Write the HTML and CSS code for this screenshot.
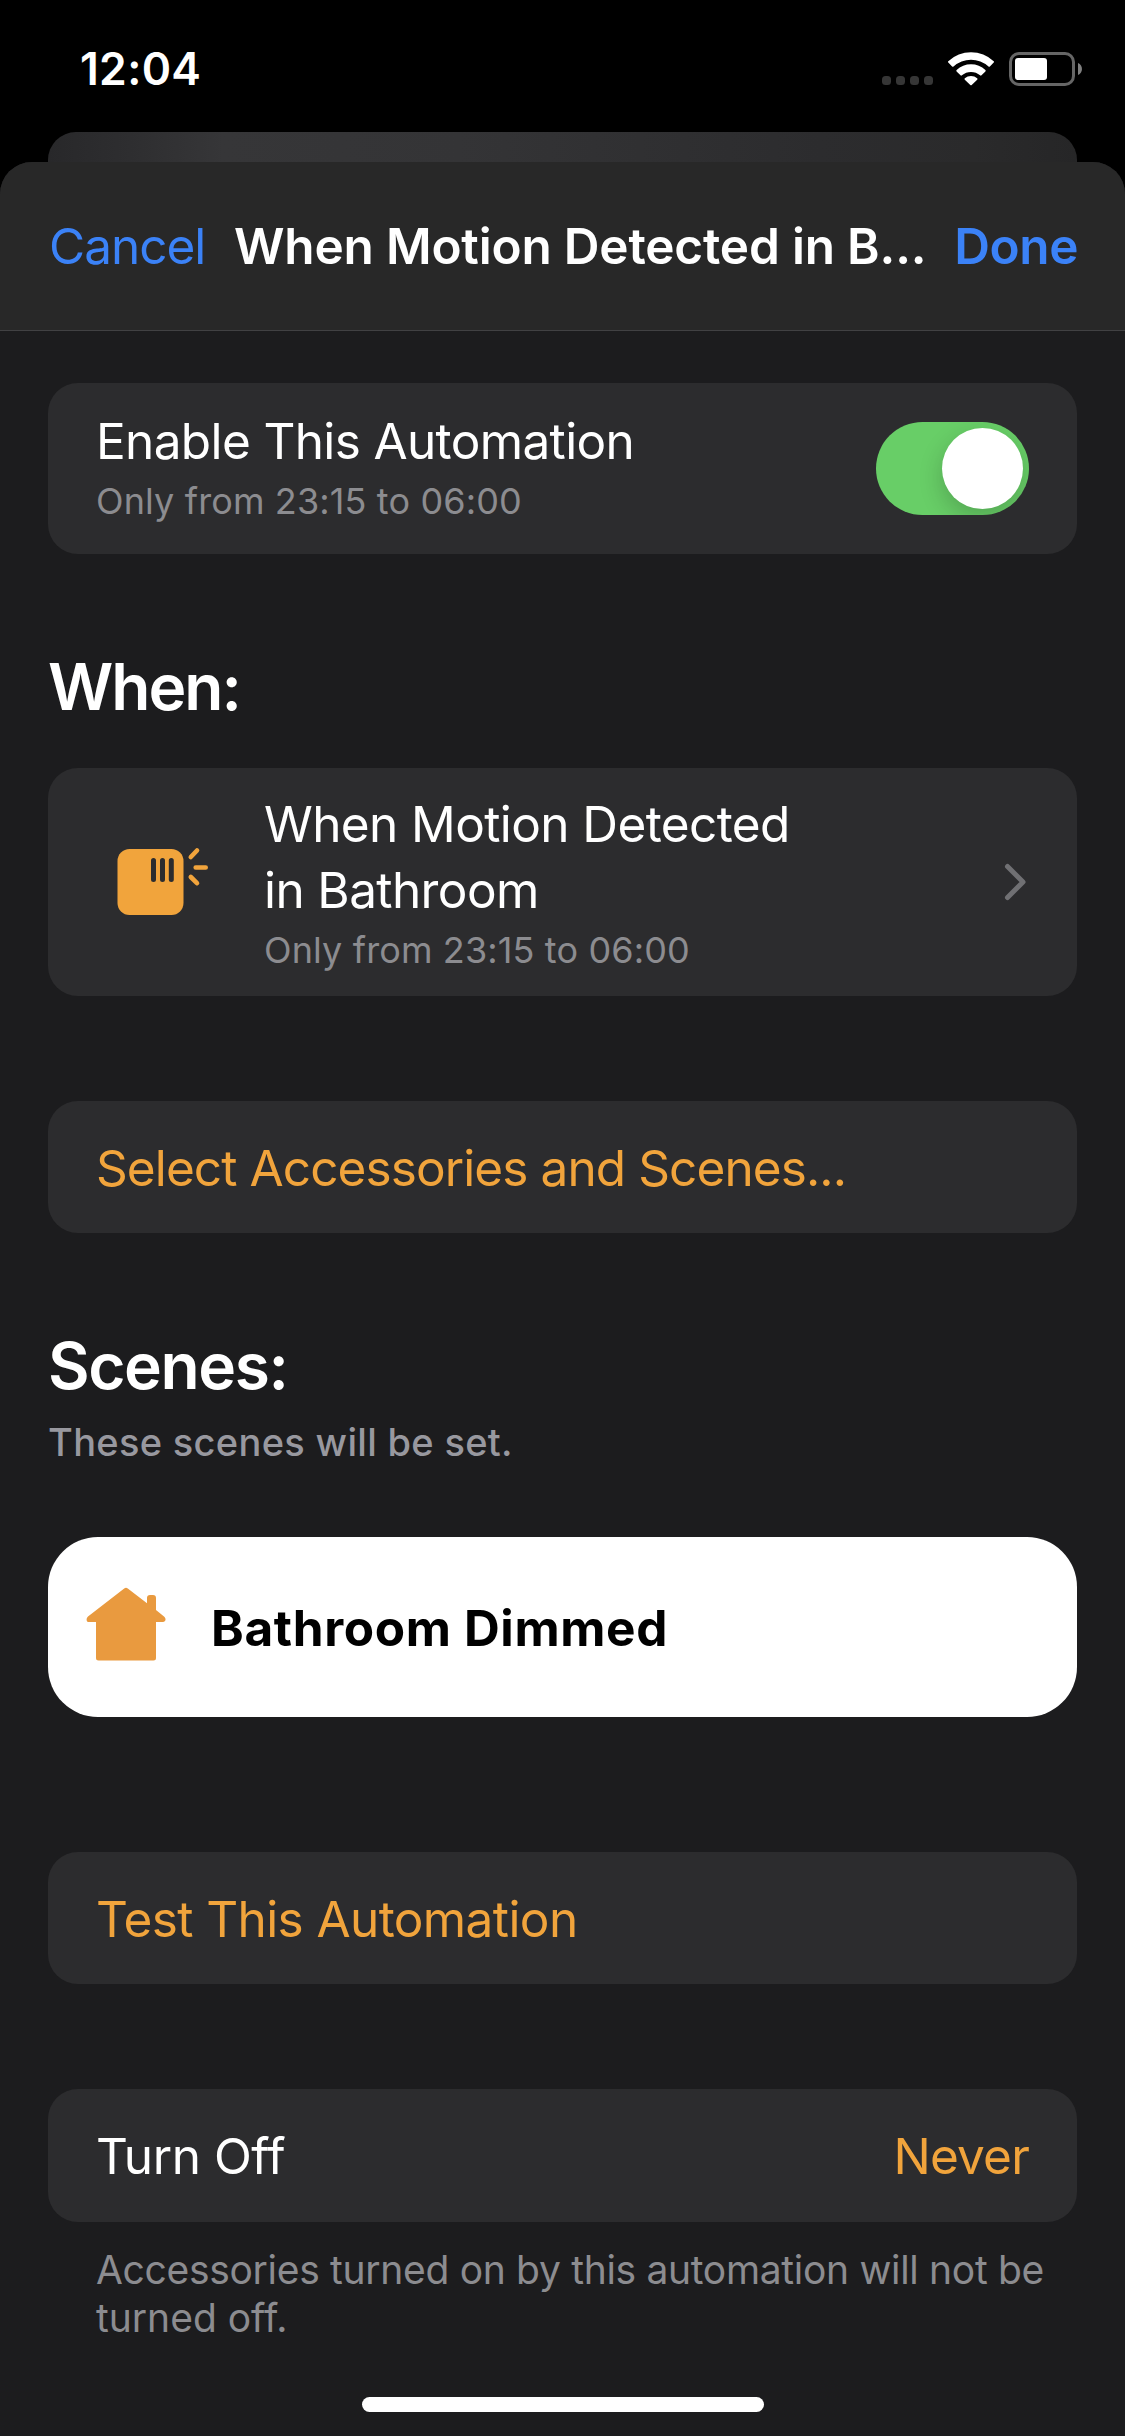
FILE: index.html
```html
<!DOCTYPE html>
<html lang="en">
<head>
<meta charset="utf-8">
<title>Automation</title>
<link rel="stylesheet" href="styles.css">
</head>
<body>
<div class="screen">
  <header class="status">
    <span class="time">12:04</span>
    <svg class="status-icons" width="204" height="40" viewBox="0 0 204 40">
      <g fill="#363636">
        <rect x="2" y="26" width="9" height="9" rx="3.5"/>
        <rect x="16" y="26" width="9" height="9" rx="3.5"/>
        <rect x="30" y="26" width="9" height="9" rx="3.5"/>
        <rect x="44" y="26" width="9" height="9" rx="3.5"/>
      </g>
      <g fill="#fff">
        <path d="M68.3 11.200a33 33 0 0 1 45.400 0a1 1 0 0 1 0 1.400l-3.800 3.800a1 1 0 0 1-1.400 0a26 26 0 0 0-35 0a1 1 0 0 1-1.400 0l-3.800-3.800a1 1 0 0 1 0-1.400z"/>
        <path d="M76.600 20a21 21 0 0 1 28.800 0a1 1 0 0 1 0 1.400l-3.900 3.900a1 1 0 0 1-1.400 0a14 14 0 0 0-18.200 0a1 1 0 0 1-1.400 0l-3.900-3.900a1 1 0 0 1 0-1.400z"/>
        <path d="M84.800 28.300a9.500 9.500 0 0 1 12.400 0a1 1 0 0 1 0 1.400l-5.500 5.200a1 1 0 0 1-1.400 0l-5.500-5.200a1 1 0 0 1 0-1.400z"/>
      </g>
      <rect x="130.500" y="3.500" width="63" height="31" rx="8.500" fill="none" stroke="#666" stroke-width="3"/>
      <rect x="135" y="8" width="32" height="22" rx="3" fill="#fff"/>
      <path d="M198 13c5.300 2 5.300 10 0 12z" fill="#808080"/>
    </svg>
  </header>
  <div class="back-sheet"></div>
  <main class="sheet">
    <nav class="nav">
      <span class="cancel">Cancel</span>
      <h1 class="nav-title">When Motion Detected in B...</h1>
      <span class="done">Done</span>
    </nav>
    <div class="content">
      <section class="card enable">
        <div>
          <div class="label l-enable">Enable This Automation</div>
          <div class="sub">Only from 23:15 to 06:00</div>
        </div>
        <div class="toggle"><div class="knob"></div></div>
      </section>
      <h2 class="heading h-when">When:</h2>
      <section class="card trigger">
        <svg class="sensor" width="96" height="74" viewBox="0 0 96 74">
          <rect x="3.500" y="4" width="66" height="66" rx="12" fill="#f1a43c"/>
          <g stroke="#2c2c2e" stroke-width="5" stroke-linecap="round"><path d="M39.500 15.500v19M48.500 15.500v19M57.300 15.500v19"/></g>
          <g stroke="#f1a43c" stroke-width="4.600" stroke-linecap="round"><path d="M76.800 12l6.200-6.500M81.700 22.500h10M76.800 32l6.200 6.200"/></g>
        </svg>
        <div class="trigger-text">
          <div class="label l-trig">When Motion Detected</div>
          <div class="label l-bath">in Bathroom</div>
          <div class="sub">Only from 23:15 to 06:00</div>
        </div>
        <svg class="chevron" width="25" height="40" viewBox="0 0 25 40"><path d="M3.500 4.500L19 20L3.500 35.500" fill="none" stroke="#707073" stroke-width="5" stroke-linecap="round" stroke-linejoin="round"/></svg>
      </section>
      <section class="card select"><span class="label accent l-select">Select Accessories and Scenes...</span></section>
      <h2 class="heading h-scenes">Scenes:</h2>
      <p class="caption">These scenes will be set.</p>
      <section class="scene">
        <svg class="house" width="80" height="80" viewBox="0 0 80 80">
          <path fill="#e99a3f" d="M38.200 2.600q1.800-1.500 3.600 0L61 17.200V12q0-3 3-3h3q3 0 3 3v12l8 6.500c3 3 1 5.500-1 5.500h-7v36q0 2.500-2.500 2.500h-55q-2.500 0-2.500-2.500V36h-7c-3 0-3-3.500-1-5.500z"/>
        </svg>
        <span class="scene-name">Bathroom Dimmed</span>
      </section>
      <section class="card test"><span class="label accent l-test">Test This Automation</span></section>
      <section class="card off"><span class="label l-off">Turn Off</span><span class="label accent l-never">Never</span></section>
      <p class="footnote"><span class="f1">Accessories turned on by this automation will not be</span><br>turned off.</p>
    </div>
    <div class="home"></div>
  </main>
</div>
</body>
</html>
```
FILE: styles.css
```css
* { box-sizing: border-box; }
body { margin: 0; background: #000; font-family: Inter, "Liberation Sans", sans-serif; color: #fff; }
h1, h2, p { margin: 0; }
svg { display: block; flex: none; }
.screen { width: 1125px; height: 2436px; overflow: hidden; display: flex; flex-direction: column; background: #000; }
.status { height: 132px; flex: none; display: flex; justify-content: space-between; padding: 50px 41px 0 80px; }
.time { font-size: 44.500px; font-weight: 600; line-height: 39px; letter-spacing: .3px; }
.back-sheet { height: 30px; flex: none; margin: 0 48px; border-radius: 28px 28px 0 0; background: linear-gradient(90deg, #28282a 0, #2e2e30 8%, #363638 17%, #343436 40%, #2c2c2e 75%, #2a2a2b 90%, #262627 100%); }
.sheet { flex: 1; display: flex; flex-direction: column; background: #1c1c1e; border-radius: 32px 32px 0 0; overflow: hidden; }
.nav { height: 169px; flex: none; display: flex; align-items: center; padding: 0 47px 0 49px; background: #282828; border-bottom: 1px solid #414143; font-size: 49.500px; line-height: 66px; white-space: nowrap; }
.cancel, .done { color: #3b82f7; }
.cancel { width: 185px; letter-spacing: -1px; }
.nav-title { flex: 1; font-size: inherit; font-weight: 600; letter-spacing: -.18px; }
.done { font-weight: 600; letter-spacing: -.4px; }
.content { flex: 1; display: flex; flex-direction: column; padding: 52px 48px 0; }
.card { flex: none; display: flex; align-items: center; padding: 0 48px; border-radius: 30px; background: #2c2c2e; }
.label { font-size: 49.500px; line-height: 66px; letter-spacing: -.6px; white-space: nowrap; }
.sub { font-size: 36px; line-height: 54px; letter-spacing: .13px; color: #8c8c90; white-space: nowrap; }
.accent { color: #f1a43c; }
.enable { height: 171px; padding-bottom: 1px; justify-content: space-between; }
.l-enable { letter-spacing: -.64px; }
.toggle { width: 153px; height: 93px; padding: 6px; border-radius: 47px; background: #68ce67; display: flex; justify-content: flex-end; overflow: hidden; }
.knob { width: 81px; height: 81px; border-radius: 50%; background: #fff; box-shadow: 0 9px 24px rgba(0,0,0,.2); }
.heading { font-size: 64px; line-height: 80px; font-weight: 600; white-space: nowrap; }
.h-when { margin-top: 93px; letter-spacing: -2px; }
.trigger { height: 228px; margin-top: 41px; padding-left: 66px; }
.trigger-text { margin-left: 54px; padding-top: 4px; flex: 1; }
.select { height: 132px; margin-top: 105px; padding-top: 2px; }
.l-select { letter-spacing: -.9px; }
.h-scenes { margin-top: 93px; letter-spacing: -1.4px; }
.caption { font-size: 38px; line-height: 54px; margin-top: 9px; font-weight: 500; letter-spacing: .32px; color: #98989f; white-space: nowrap; }
.scene { height: 180px; flex: none; margin-top: 68px; border-radius: 50px; background: #fff; display: flex; align-items: center; padding-left: 38px; color: #000; }
.house { margin-bottom: 2px; }
.scene-name { margin-left: 45px; padding-top: 2px; font-size: 49.500px; line-height: 66px; font-weight: 700; letter-spacing: .65px; white-space: nowrap; }
.test { height: 132px; margin-top: 135px; padding-top: 2px; }
.off { height: 133px; margin-top: 105px; padding-top: 1px; justify-content: space-between; }
.l-off { letter-spacing: -.45px; }
.l-never { letter-spacing: -.8px; }
.footnote { margin: 24px 0 0 48px; font-size: 39px; line-height: 48px; color: #8c8c90; white-space: nowrap; }
.f1 { letter-spacing: -.31px; }
.home { flex: none; width: 402px; height: 15px; margin: 0 auto 24px; border-radius: 8px; background: #fff; }
```
